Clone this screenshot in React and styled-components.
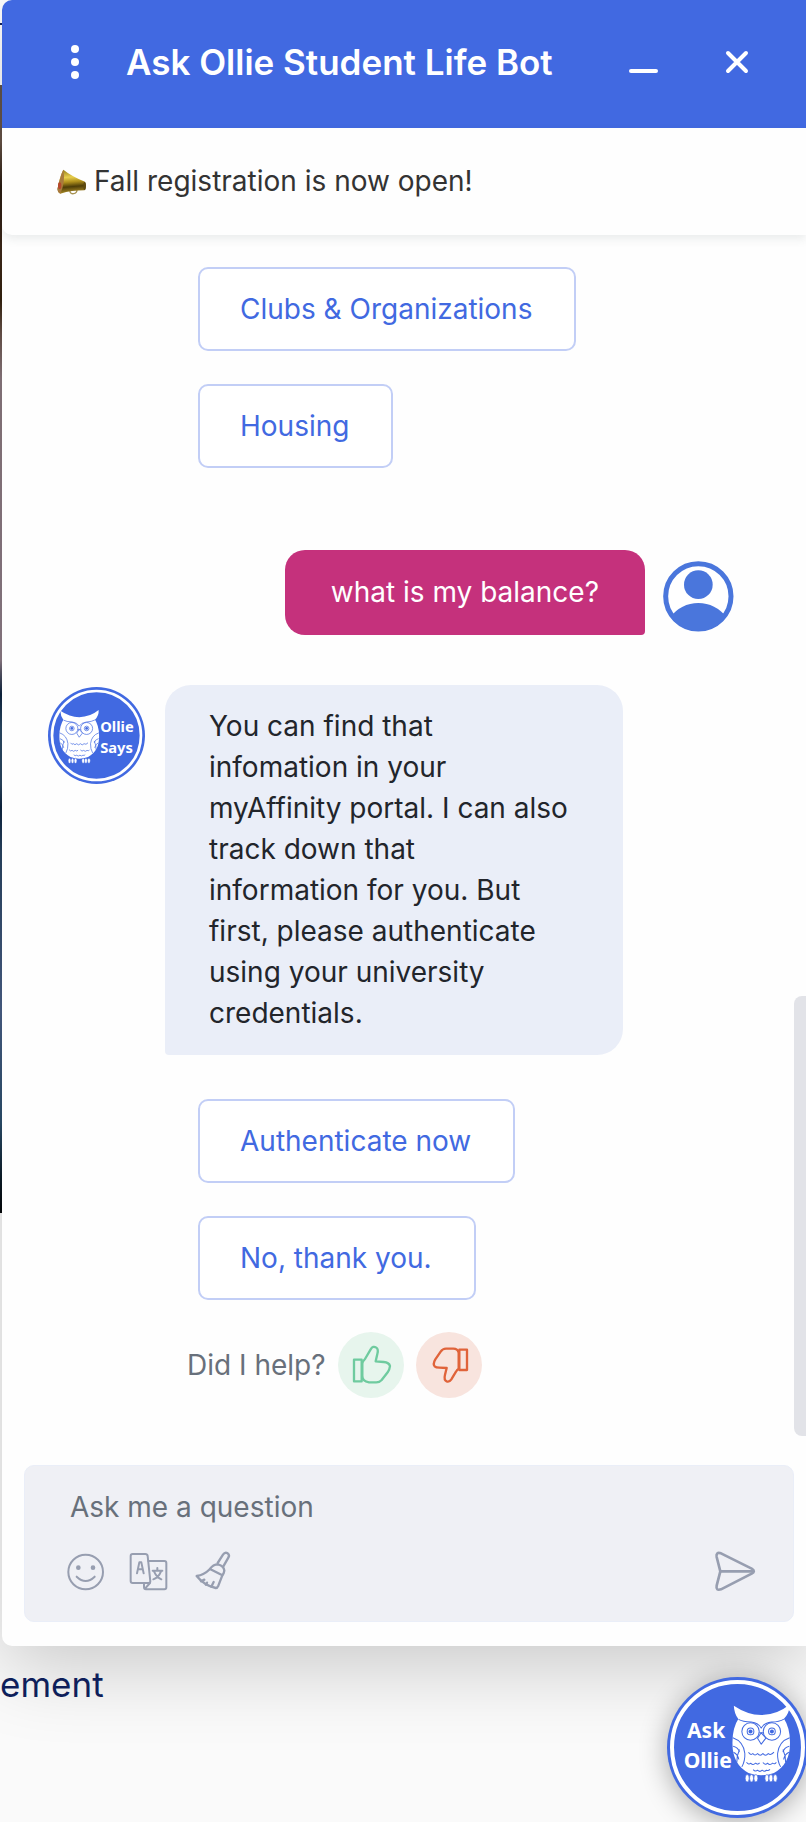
import React from "react";
import styled, { createGlobalStyle } from "styled-components";

const BLUE = "#4169e1";

const GlobalStyle = createGlobalStyle`
  *, *::before, *::after { box-sizing: border-box; }
  body {
    margin: 0;
    background: #fafafa;
    font-family: Inter, "Liberation Sans", sans-serif;
    font-size: 28px;
    line-height: 41px;
    color: #22252b;
  }
  button, input { font: inherit; }
`;

const Page = styled.div`
  position: relative;
  min-height: 100vh;
  overflow-x: clip;
`;

const Backdrop = styled.div`
  position: absolute;
  inset: 0;
  display: flex;
  flex-direction: column;
`;

const SiteNav = styled.div`
  height: 85px;
  background: #ffffff;
  background-image: linear-gradient(#14235c 0 0);
  background-size: 100% 2px;
  background-position: 0 23px;
  background-repeat: no-repeat;
`;

const SitePhoto = styled.div`
  height: 1128px;
  background: linear-gradient(
    #62554b 0%, #6a5448 5%, #2a1a0f 9%, #402a1b 15%, #35230f 19%, #6a544b 22%,
    #8c7a80 26%, #8e7d88 51%, #5d5a6a 52%, #0e2440 54%, #2b4a66 57%,
    #2a4560 62%, #0d2440 64%, #2a4563 68%, #4a6088 82%, #2c4f6d 92%, #0c1c28 97%, #05070a 100%
  );
`;

const Panel = styled.section`
  position: relative;
  margin-left: 2px;
  background: #fefefe;
  border-radius: 10px 0 0 10px;
  box-shadow: 0 20px 80px rgba(0, 0, 0, 0.2);
`;

const Header = styled.header`
  display: flex;
  align-items: center;
  min-height: 128px;
  padding: 0 47px 4px 51px;
  background: ${BLUE};
  border-radius: 10px 0 0 0;
  color: #ffffff;
`;

const Title = styled.h1`
  flex: 1;
  margin: 0 0 0 29px;
  font-size: 35px;
  font-weight: 600;
  line-height: 44px;
`;

const HeaderActions = styled.div`
  display: flex;
  gap: 49px;
`;

const IconButton = styled.button`
  display: flex;
  flex: none;
  align-items: center;
  justify-content: center;
  width: 44px;
  height: 44px;
  padding: 0;
  border: 0;
  background: none;
  color: inherit;
  cursor: pointer;
`;

const Announcement = styled.div`
  position: relative;
  display: flex;
  align-items: center;
  gap: 8px;
  padding: 33px 55px;
  background: #fefefe;
  border-radius: 0 0 0 10px;
  box-shadow: 0 4px 10px rgba(60, 80, 80, 0.1);
  color: #333333;
`;

const Messages = styled.div`
  position: relative;
  padding: 32px 72px 67px 46px;
`;

const ScrollThumb = styled.div`
  position: absolute;
  right: 0;
  bottom: 29px;
  width: 12px;
  height: 440px;
  background: #e2e3e8;
  border-radius: 8px 0 0 8px;
`;

const Options = styled.div`
  display: flex;
  flex-direction: column;
  align-items: flex-start;
  gap: 33px;
  padding-left: 150px;
`;

const OptionButton = styled.button`
  padding: 20px 42px 20px 40px;
  border: 2px solid #c2cef6;
  border-radius: 10px;
  background: #ffffff;
  color: ${BLUE};
  line-height: 40px;
  cursor: pointer;
`;

const UserRow = styled.div`
  display: flex;
  align-items: center;
  justify-content: flex-end;
  gap: 18px;
  margin: 82px 0 50px;
`;

const UserAvatar = styled.svg`
  flex: none;
  width: 71px;
  height: 71px;
  margin-top: 8px;
`;

const BotRow = styled.div`
  display: flex;
  align-items: flex-start;
  gap: 20px;
  margin-bottom: 44px;
`;

const Bubble = styled.p`
  margin: 0;
  padding: ${(p) => (p.$own ? "22px 46px" : "21px 53px 21px 44px")};
  max-width: 458px;
  border-radius: ${(p) => (p.$own ? "20px 20px 4px 20px" : "26px 26px 26px 4px")};
  background: ${(p) => (p.$own ? "#c5317c" : "#eaeef8")};
  color: ${(p) => (p.$own ? "#ffffff" : "#22252b")};
`;

const BotAvatar = styled.svg`
  flex: none;
  width: 97px;
  height: 97px;
  margin-top: 2px;
`;

const Feedback = styled.div`
  display: flex;
  align-items: center;
  gap: 12px;
  margin-top: 32px;
  padding-left: 139px;
  color: #68707b;
`;

const ThumbButton = styled.button`
  flex: none;
  width: 66px;
  height: 66px;
  padding: 0;
  border: 0;
  border-radius: 50%;
  background: ${(p) => (p.$down ? "#f8e4de" : "#e7f5ed")};
  color: ${(p) => (p.$down ? "#e0633a" : "#6fcb9f")};
  cursor: pointer;

  svg { display: block; width: 100%; height: 100%; }
`;

const ComposerArea = styled.form`
  padding: 0 12px 24px 22px;
`;

const Composer = styled.div`
  padding: 21px 36px 27px 38px;
  border: 1px solid #eaeef8;
  border-radius: 10px;
  background: #eff0f5;
  color: #979eb0;
`;

const Question = styled.input`
  display: block;
  width: 100%;
  height: 41px;
  padding: 0 7px;
  border: 0;
  outline: 0;
  background: none;
  color: #22252b;

  &::placeholder { color: #68707b; opacity: 1; }
`;

const Tools = styled.div`
  display: flex;
  gap: 20px;
  margin-top: 22px;

  button:last-child { margin-left: auto; }
`;

const SiteFooter = styled.footer`
  position: relative;
  min-height: 176px;
  padding: 16px 0;
  color: #0e1f5b;
  font-size: 35px;
  line-height: 44px;
`;

const Launcher = styled.button`
  position: absolute;
  right: -2px;
  bottom: 4px;
  width: 141px;
  height: 141px;
  padding: 0;
  border: 0;
  border-radius: 50%;
  background: ${BLUE};
  box-shadow: 0 4px 28px rgba(0, 0, 0, 0.32);
  cursor: pointer;

  svg { display: block; width: 100%; height: 100%; }
`;

const BadgeText = styled.text`
  fill: #ffffff;
  font-family: "Noto Sans", "Open Sans", sans-serif;
  font-weight: 700;
`;

function Owl(props) {
  return (
    <g {...props}>
      <path
        d="M236 142 Q216 172 216 215 Q214 282 264 308 Q302 322 340 308 Q390 282 388 215 Q388 172 368 142 Z"
        fill="#fff"
      />
      <path
        d="M220 107 Q260 134 302 135 Q350 134 386 104 Q388 128 370 146 Q350 154 333 155 Q312 158 302 172 Q292 158 272 155 Q248 153 233 146 Q221 130 220 107 Z"
        fill="#fff"
      />
      <g fill="none" stroke={BLUE} strokeWidth="3" strokeLinejoin="round">
        <path d="M234 148 Q246 155 272 156 Q294 159 302 174 Q310 159 333 156 Q356 155 370 147" />
        <circle cx="270" cy="184" r="26" />
        <circle cx="334" cy="184" r="26" />
        <circle cx="270" cy="184" r="10" />
        <circle cx="334" cy="184" r="10" />
        <path d="M296 188 L308 188" />
        <path d="M302 188 L316 204 L302 222 L291 204 Z" fill="#fff" />
        <path d="M217 203 Q249 214 253 250 Q254 272 244 290 M218 228 Q234 232 237 246 M219 246 Q232 252 235 268 M237 238 Q228 258 229 276" />
        <path d="M387 203 Q355 214 351 250 Q350 272 360 290 M386 228 Q370 232 367 246 M385 246 Q372 252 369 268 M367 238 Q376 258 375 276" />
        <path d="M264 246 Q270 257 277 250 Q283 259 291 250 Q299 260 307 250 Q315 260 323 250 Q331 257 340 246" />
        <path d="M258 276 Q264 285 271 279 Q277 287 285 279 Q292 285 297 278 M307 277 Q314 286 321 279 Q328 287 336 279 Q343 284 347 276" />
        <path d="M278 298 Q284 305 291 300 Q298 307 305 300 Q312 306 318 300 Q324 303 328 297" />
      </g>
      <g fill={BLUE}>
        <circle cx="270" cy="184" r="6" />
        <circle cx="334" cy="184" r="6" />
      </g>
      <g fill="#fff" stroke={BLUE} strokeWidth="2">
        <ellipse cx="260" cy="324" rx="6" ry="11" />
        <ellipse cx="273" cy="324" rx="6" ry="11" />
        <ellipse cx="286" cy="324" rx="6" ry="11" />
        <ellipse cx="319" cy="324" rx="6" ry="11" />
        <ellipse cx="331" cy="324" rx="6" ry="11" />
        <ellipse cx="344" cy="324" rx="6" ry="11" />
      </g>
    </g>
  );
}

function OllieSays() {
  return (
    <BotAvatar viewBox="54 52 290 290" role="img" aria-label="Ollie Says">
      <circle cx="199" cy="197" r="145" fill={BLUE} />
      <circle cx="199" cy="197" r="133" fill="none" stroke="#fff" strokeWidth="8" />
      <Owl transform="translate(-61 49) scale(0.69)" />
      <BadgeText x="210" y="186" fontSize="44">Ollie</BadgeText>
      <BadgeText x="210" y="248" fontSize="44">Says</BadgeText>
    </BotAvatar>
  );
}

function MegaphoneIcon() {
  return (
    <svg width="29" height="26" viewBox="36 35 87 76" aria-hidden="true">
      <defs>
        <linearGradient id="brass" x1="0" y1="0" x2="0.1" y2="1">
          <stop offset="0" stopColor="#8f7714" />
          <stop offset="0.35" stopColor="#e8cf4d" />
          <stop offset="0.55" stopColor="#b0901c" />
          <stop offset="0.75" stopColor="#4e3d08" />
          <stop offset="1" stopColor="#a98a25" />
        </linearGradient>
      </defs>
      <path d="M74 98 Q76 110 86 108 Q96 106 96 96" fill="none" stroke="#a89352" strokeWidth="4" />
      <path d="M55 36 Q80 56 120 72 Q124 84 119 98 Q80 98 46 108 Q36 104 38 92 Q44 58 55 36 Z" fill="url(#brass)" />
      <path d="M55 36 Q62 72 46 108 Q36 104 38 92 Q44 58 55 36 Z" fill="#a97a3c" />
      <ellipse cx="44" cy="84" rx="5" ry="10" fill="#b5482c" />
      <ellipse cx="119" cy="85" rx="4" ry="12" fill="#5e4a10" />
    </svg>
  );
}

function ThumbUpIcon() {
  return (
    <svg viewBox="507 756 198 198" fill="none" stroke="currentColor" strokeWidth="7" strokeLinejoin="round" aria-hidden="true">
      <path d="M555 839 H578 V904 H555 Z" />
      <path d="M580 851 Q580 845 588 837 L605 808 Q612 796 622 803 Q629 808 625 822 L620 844 L644 846 Q660 847 663 858 Q662 868 656 877 L638 900 Q632 907 622 907 H600 Q580 904 580 888 Z" />
    </svg>
  );
}

function ThumbDownIcon() {
  return (
    <svg viewBox="738 756 198 198" fill="none" stroke="currentColor" strokeWidth="7" strokeLinejoin="round" aria-hidden="true">
      <path d="M868 809 H891 V870 H868 Z" />
      <path d="M866 818 Q863 806 850 806 H828 Q818 806 812 815 L796 838 Q788 852 794 859 Q798 863 808 863 L830 864 L825 884 Q821 900 830 904 Q838 907 844 898 L858 875 Q861 869 866 866 Z" />
    </svg>
  );
}

function SmileIcon() {
  return (
    <svg width="44" height="44" viewBox="-1 0 132 132" fill="none" stroke="currentColor" strokeWidth="6" strokeLinecap="round" aria-hidden="true">
      <circle cx="67" cy="66" r="52" />
      <path d="M40 80 Q67 106 94 80" />
      <circle cx="45" cy="53" r="4" fill="currentColor" />
      <circle cx="89" cy="53" r="4" fill="currentColor" />
    </svg>
  );
}

function TranslateIcon() {
  return (
    <svg width="44" height="44" viewBox="381 330 132 132" fill="none" stroke="currentColor" strokeWidth="6" strokeLinejoin="round" strokeLinecap="round" aria-hidden="true">
      <path d="M398 342 H436 Q442 342 443 348 L451 424 Q451 429 445 429 H398 Q392 429 392 423 V348 Q392 342 398 342 Z" />
      <path d="M445 363 H493 Q499 363 499 369 V442 Q499 448 493 448 H438 Q432 448 432 442 V430 M450 429 L435 446" />
      <path d="M411 400 L418 367 H424 L431 400 M414 388 H428" />
      <path d="M458 392 H487 M472 384 V391 M462 394 Q470 412 484 418 M483 394 Q476 412 460 418" />
    </svg>
  );
}

function BroomIcon() {
  return (
    <svg width="44" height="44" viewBox="573 330 132 132" fill="none" stroke="currentColor" strokeWidth="7" strokeLinejoin="round" strokeLinecap="round" aria-hidden="true">
      <path d="M653 369 L669 344 Q675 335 683 340 Q690 345 685 353 L670 379" />
      <path d="M630 387 Q639 373 654 373 Q672 378 673 392 Q672 400 667 406 Z" />
      <path d="M630 387 Q612 405 590 408 Q612 436 647 444 Q652 444 655 437 L667 406" />
      <path d="M603 424 L613 419 M618 434 L621 428 M634 440 L641 426" />
    </svg>
  );
}

function SendIcon() {
  return (
    <svg width="44" height="44" viewBox="219 330 132 132" fill="none" stroke="currentColor" strokeWidth="8" strokeLinejoin="round" strokeLinecap="round" aria-hidden="true">
      <path d="M243 340 L335 386 Q348 394 335 401 L243 448 Q227 453 230 437 L241 394 L230 351 Q227 335 243 340 Z" />
      <path d="M242 394 H338" />
    </svg>
  );
}

export default function App() {
  return (
    <>
      <GlobalStyle />
      <Page>
        <Backdrop aria-hidden="true">
          <SiteNav />
          <SitePhoto />
        </Backdrop>

        <Panel aria-label="Chat">
          <Header>
            <IconButton type="button" aria-label="Menu">
              <svg width="10" height="36" viewBox="0 0 10 36" fill="currentColor" aria-hidden="true">
                <circle cx="5" cy="5" r="4" />
                <circle cx="5" cy="18" r="4" />
                <circle cx="5" cy="31" r="4" />
              </svg>
            </IconButton>
            <Title>Ask Ollie Student Life Bot</Title>
            <HeaderActions>
              <IconButton type="button" aria-label="Minimize">
                <svg width="30" height="30" viewBox="0 0 30 30" stroke="currentColor" strokeWidth="4" strokeLinecap="round" aria-hidden="true">
                  <path d="M2 24 H27" />
                </svg>
              </IconButton>
              <IconButton type="button" aria-label="Close">
                <svg width="24" height="24" viewBox="0 0 24 24" stroke="currentColor" strokeWidth="4" strokeLinecap="round" aria-hidden="true">
                  <path d="M3 3 L21 21 M21 3 L3 21" />
                </svg>
              </IconButton>
            </HeaderActions>
          </Header>

          <Announcement>
            <MegaphoneIcon />
            <span>Fall registration is now open!</span>
          </Announcement>

          <Messages>
            <Options>
              <OptionButton type="button">Clubs &amp; Organizations</OptionButton>
              <OptionButton type="button">Housing</OptionButton>
            </Options>

            <UserRow>
              <Bubble $own>what is my balance?</Bubble>
              <UserAvatar viewBox="0 0 213 213" role="img" aria-label="You">
                <defs>
                  <clipPath id="userClip">
                    <circle cx="106" cy="106" r="104" />
                  </clipPath>
                </defs>
                <circle cx="106" cy="106" r="98" fill="#fff" stroke="#4a76dc" strokeWidth="15" />
                <circle cx="106" cy="71" r="43" fill="#4a76dc" />
                <path d="M20 170 Q55 126 106 126 Q157 126 192 170 V213 H20 Z" fill="#4a76dc" clipPath="url(#userClip)" />
              </UserAvatar>
            </UserRow>

            <BotRow>
              <OllieSays />
              <Bubble>
                You can find that infomation in your myAffinity portal. I can also track down that
                information for you. But first, please authenticate using your university credentials.
              </Bubble>
            </BotRow>

            <Options>
              <OptionButton type="button">Authenticate now</OptionButton>
              <OptionButton type="button">No, thank you.</OptionButton>
            </Options>

            <Feedback>
              <span>Did I help?</span>
              <ThumbButton type="button" aria-label="Yes, this helped">
                <ThumbUpIcon />
              </ThumbButton>
              <ThumbButton type="button" $down aria-label="No, this did not help">
                <ThumbDownIcon />
              </ThumbButton>
            </Feedback>
            <ScrollThumb />
          </Messages>

          <ComposerArea onSubmit={(e) => e.preventDefault()}>
            <Composer>
              <Question type="text" aria-label="Ask me a question" placeholder="Ask me a question" />
              <Tools>
                <IconButton type="button" aria-label="Emoji">
                  <SmileIcon />
                </IconButton>
                <IconButton type="button" aria-label="Translate">
                  <TranslateIcon />
                </IconButton>
                <IconButton type="button" aria-label="Clear conversation">
                  <BroomIcon />
                </IconButton>
                <IconButton type="submit" aria-label="Send">
                  <SendIcon />
                </IconButton>
              </Tools>
            </Composer>
          </ComposerArea>
        </Panel>

        <SiteFooter>
          <span>ement</span>
          <Launcher type="button" aria-label="Ask Ollie">
            <svg viewBox="20 21 422 422" aria-hidden="true">
              <circle cx="231" cy="232" r="196" fill="none" stroke="#fff" strokeWidth="12" />
              <BadgeText x="80" y="203" fontSize="63">Ask</BadgeText>
              <BadgeText x="70" y="293" fontSize="63">Ollie</BadgeText>
              <Owl />
            </svg>
          </Launcher>
        </SiteFooter>
      </Page>
    </>
  );
}
